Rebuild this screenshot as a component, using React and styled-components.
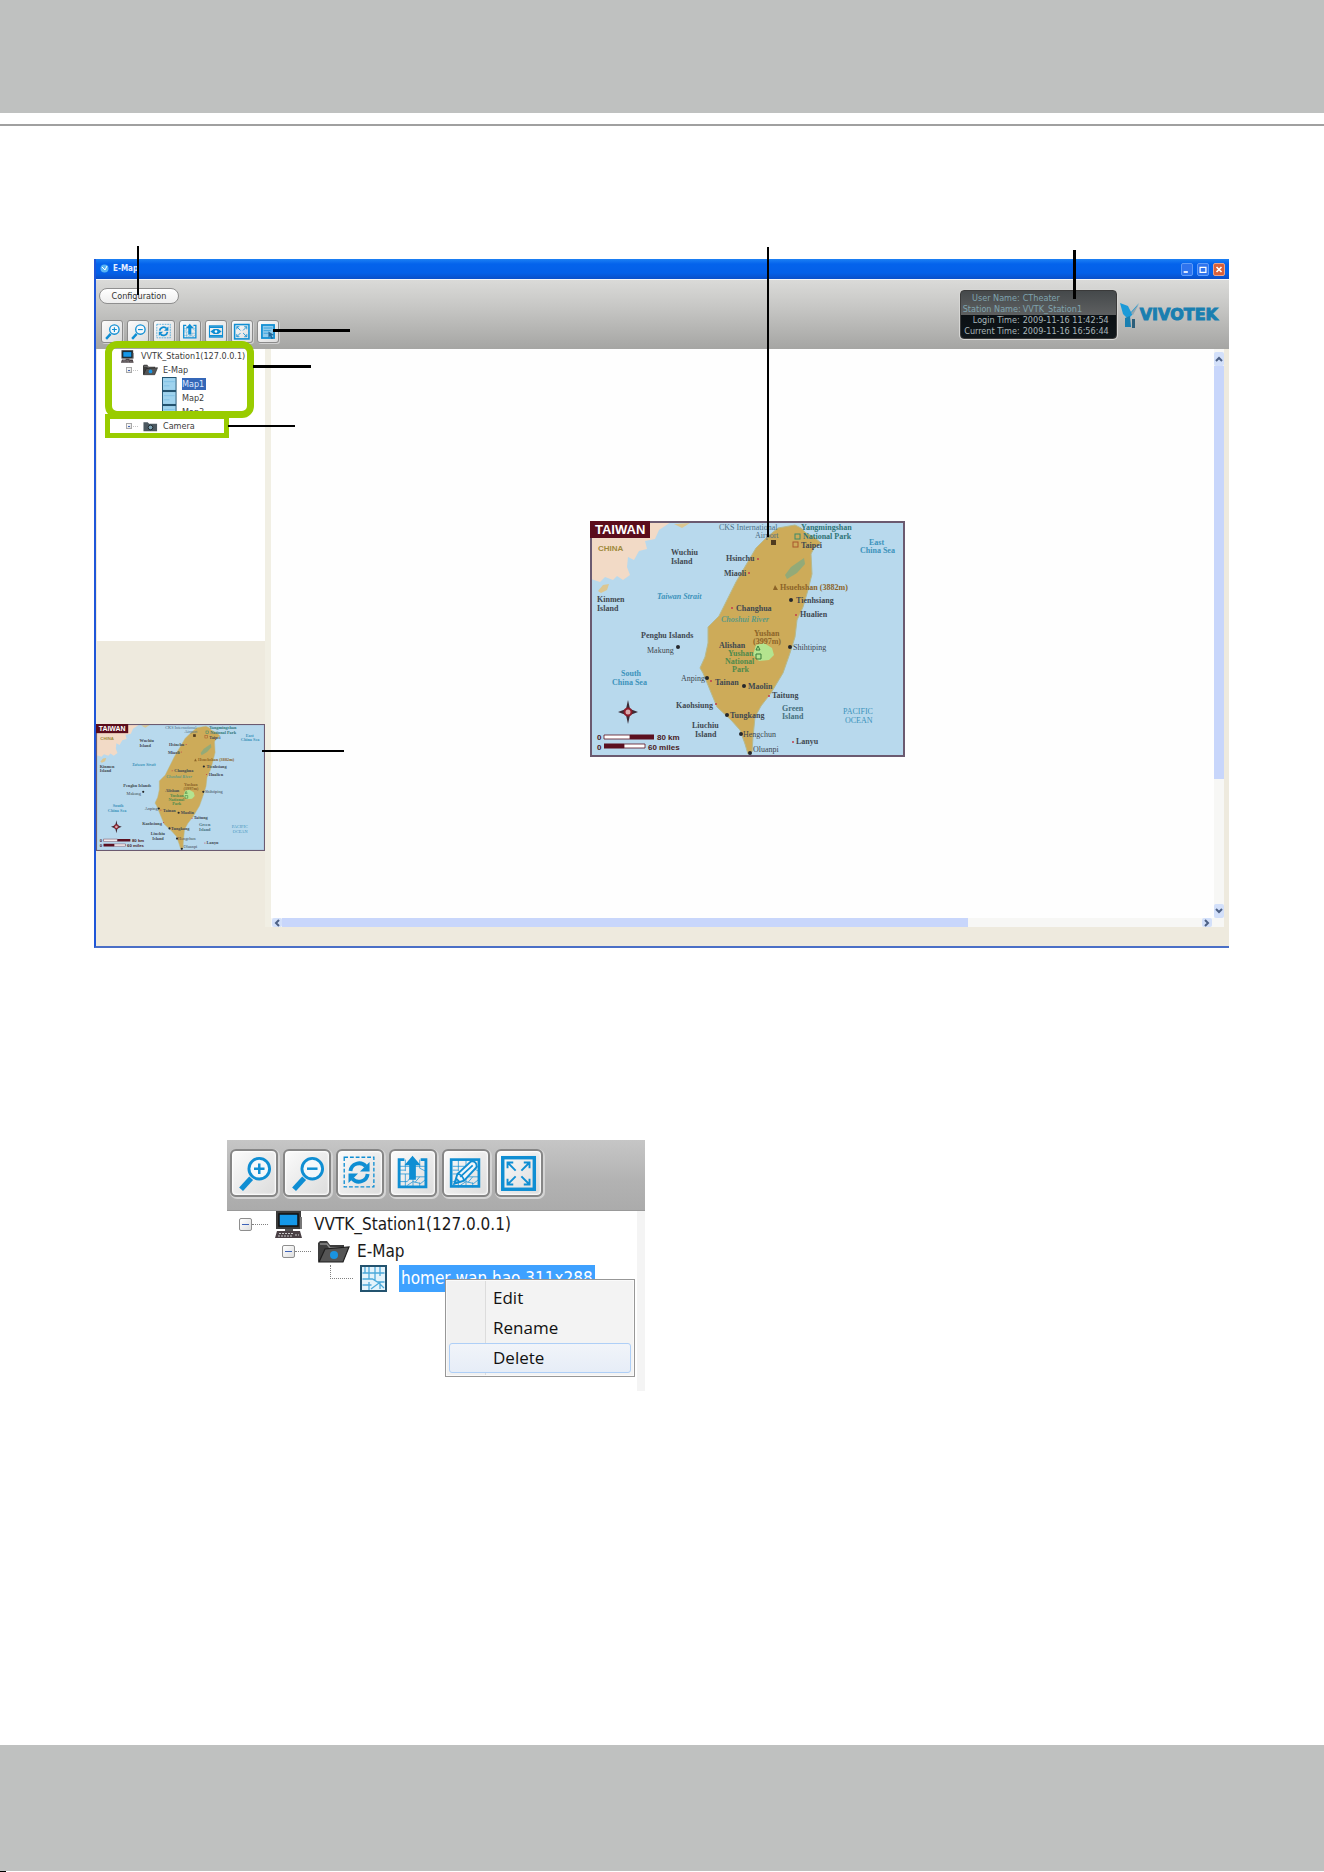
import React, { useState } from "react";
import styled, { createGlobalStyle, css } from "styled-components";

const GlobalStyle = createGlobalStyle`
* {
  box-sizing: border-box;
}
body {
  margin: 0;
  background: #ffffff;
  font-family: "DejaVu Sans Condensed", "DejaVu Sans", sans-serif;
}
button {
  font-family: inherit;
  cursor: pointer;
}
`;

const BLUE = "#0f8ed3";

/* ---------- page ---------- */

const Page = styled.div`
  min-height: 100vh;
  display: flex;
  flex-direction: column;
`;

const PageHeader = styled.header`
  height: 126px;
  border-bottom: 2px solid #a0a0a0;

  &::before {
    content: "";
    display: block;
    height: 113px;
    background: #bfc1c0;
  }
`;

const PageBody = styled.main`
  flex: 1;
  padding: 133px 95px 0 94px;
`;

const PageFooter = styled.footer`
  height: 127px;
  display: flex;
  flex-direction: column;
  background: #bfc1c0;
`;

const FooterEdge = styled.div`
  height: 1px;
  margin-top: auto;
  background: linear-gradient(90deg, #000000 6px, #ffffff 6px);
`;

/* callout line that starts on the part it points at */
const Leader = styled.span`
  position: absolute;
  z-index: 5;
  background: #000000;
  left: ${p => p.$x}px;
  top: ${p => p.$y}px;
  width: ${p => (p.$vertical ? p.$thick || 2 : p.$length)}px;
  height: ${p => (p.$vertical ? p.$length : p.$thick || 2)}px;
`;

const Anchor = styled.div`
  position: relative;
`;

const Highlight = styled.span`
  position: absolute;
  z-index: 4;
  left: 8px;
  top: ${p => p.$top}px;
  width: ${p => p.$width}px;
  height: ${p => p.$height}px;
  border: ${p => p.$border}px solid #99cc00;
  border-radius: ${p => p.$radius || 0}px;
  pointer-events: none;
`;

/* ---------- e-map window ---------- */

const Window = styled.section`
  background: #eeeade;
  border-left: 2px solid #1f56d8;
  border-bottom: 2px solid #4a6fc6;
`;

const TitleBar = styled.div`
  height: 21px;
  display: flex;
  align-items: center;
  gap: 4px;
  padding: 0 4px;
  background: linear-gradient(#1c80f4, #0463ec 25%, #0460e8 70%, #0a4fc8);
  border-bottom: 1px solid #f4f6fa;
`;

const WindowTitle = styled.h1`
  flex: 1;
  margin: 0;
  font-size: 8px;
  line-height: 12px;
  font-weight: 700;
  color: #e4efff;
`;

const WindowButton = styled.button`
  width: 12px;
  height: 13px;
  padding: 0;
  display: flex;
  border: 1px solid ${p => (p.$close ? "#e9a48c" : "#5f9cf8")};
  border-radius: 2px;
  background: ${p => (p.$close ? "#d9603a" : "#2f74ee")};
`;

const Toolbar = styled.div`
  height: 69px;
  display: flex;
  justify-content: space-between;
  align-items: flex-start;
  padding: 8px 11px 0 3px;
  background: linear-gradient(#dadad8, #c9c9c7 35%, #a5a5a3);
`;

const ToolbarLeft = styled.div`
  display: flex;
  flex-direction: column;
  align-items: flex-start;
  gap: 16px;
`;

const ConfigButton = styled.button`
  display: block;
  width: 80px;
  height: 16px;
  padding: 0;
  border: 1px solid #8f8f8f;
  border-radius: 8px;
  background: linear-gradient(#ffffff, #eeeeee);
  font-size: 9px;
  line-height: 12px;
  color: #333333;
`;

const ButtonRow = styled.div`
  display: flex;
  gap: ${p => (p.$large ? 5 : 4)}px;
  padding-left: ${p => (p.$large ? 0 : 2)}px;
`;

const ToolButton = styled.button`
  padding: 0;
  display: block;
  background: linear-gradient(135deg, #fbfbfb, #dcdcdc);
  ${p =>
    p.$large
      ? css`
          width: 48px;
          height: 48px;
          border: 2px solid #868686;
          border-radius: 6px;
          box-shadow: inset 0 0 2px 1px #ffffff, 1px 1px 0 1px #d4d4d4;
        `
      : css`
          width: 22px;
          height: 23px;
          border: 1px solid #8b8b8b;
          border-radius: 3px;
          box-shadow: 1px 1px 0 #d0d0d0;
        `}

  svg {
    display: block;
    width: 100%;
    height: 100%;
  }
`;

const ToolbarRight = styled.div`
  display: flex;
  align-items: center;
  gap: 3px;
  padding-top: 2px;
`;

const Status = styled.dl`
  width: 157px;
  height: 49px;
  margin: 0;
  padding: 2px 0 0 2px;
  display: grid;
  grid-template-columns: 57px 1fr;
  grid-auto-rows: 11px;
  column-gap: 3px;
  border: 1px solid #3a3a3a;
  border-radius: 4px;
  background: linear-gradient(#45494b, #5d5f60 50%, #0b1014 50%, #10161a);
  box-shadow: 0 0 0 1px #d6d6d4;
  font-size: 9px;
  line-height: 11px;
  white-space: nowrap;
`;

const StatusName = styled.dt`
  text-align: right;
  color: ${p => (p.$dim ? "#7fa3ae" : "#a9b6ba")};
`;

const StatusValue = styled.dd`
  margin: 0;
  color: ${p => (p.$dim ? "#7fa3ae" : "#a9b6ba")};
`;

const Logo = styled.div`
  display: flex;
  align-items: center;
  color: #1a7fb0;
  font-family: "DejaVu Sans", sans-serif;
  font-size: 16px;
  line-height: 20px;
  font-weight: 700;
  -webkit-text-stroke: 1px #1a7fb0;

  svg {
    width: 20px;
    height: 28px;
  }
`;

const WindowBody = styled.div`
  display: flex;
  min-height: 597px;
  padding: 0 5px 19px 0;
`;

const Sidebar = styled.aside`
  position: relative;
  width: 169px;
  flex: none;
  display: flex;
  flex-direction: column;
  gap: 83px;
`;

const Tree = styled.div`
  position: relative;
  height: 292px;
  margin-left: 1px;
  background: #ffffff;
`;

const Thumb = styled.div`
  position: relative;
  height: 127px;

  svg {
    display: block;
    width: 100%;
    height: 100%;
  }
`;

const Divider = styled.div`
  width: 6px;
  flex: none;
  background: #f1efe4;
`;

const Viewport = styled.div`
  flex: 1;
  display: flex;
  flex-direction: column;
  background: #fefefe;
`;

const ViewportRow = styled.div`
  flex: 1;
  display: flex;
`;

const Canvas = styled.div`
  flex: 1;
  display: flex;
  align-items: center;
  justify-content: center;
  padding: 10px 0 0 10px;
`;

const MapFrame = styled.div`
  position: relative;
  width: 315px;
  height: 236px;

  svg {
    display: block;
  }
`;

const ScrollBar = styled.div`
  display: flex;
  align-items: center;
  background: #f7f7f5;
  ${p =>
    p.$vertical
      ? css`
          width: 10px;
          flex-direction: column;
          padding: 3px 0 0;
        `
      : css`
          height: 9px;
          padding: 0 12px 0 1px;
        `}
`;

const ScrollThumb = styled.div`
  background: #c8d6fb;
  flex: 0 0 ${p => p.$share};
  width: ${p => (p.$vertical ? "10px" : "auto")};
  height: ${p => (p.$vertical ? "auto" : "9px")};
  margin-bottom: auto;
  margin-right: auto;
`;

const ScrollArrow = styled.button`
  width: 10px;
  height: ${p => (p.$tall ? 14 : 9)}px;
  flex: none;
  padding: 0;
  display: flex;
  align-items: center;
  justify-content: center;
  border: 0;
  border-radius: 2px;
  background: #d3e0fa;
`;

/* ---------- tree ---------- */

const TreeRow = styled.div`
  display: flex;
  align-items: center;
  white-space: nowrap;
  padding-left: ${p => p.$indent}px;
  ${p =>
    p.$large
      ? css`
          height: 27px;
          gap: 7px;
          font-size: 17px;
          line-height: 27px;
          color: #1a1a1a;
        `
      : css`
          height: 14px;
          gap: 5px;
          font-size: 9px;
          line-height: 12px;
          color: #3c3c3c;
        `}

  svg {
    flex: none;
  }
`;

const Branch = styled.span`
  display: flex;
  align-items: center;

  &::after {
    content: "";
    width: ${p => (p.$large ? 16 : 5)}px;
    border-top: 1px dotted ${p => (p.$large ? "#808080" : "#c4c4c4")};
    margin-left: ${p => (p.$large ? 0 : 1)}px;
  }
`;

const Toggle = styled.button`
  width: ${p => (p.$large ? 13 : 6)}px;
  height: ${p => (p.$large ? 13 : 6)}px;
  padding: 0;
  display: flex;
  align-items: center;
  justify-content: center;
  border: 1px solid ${p => (p.$large ? "#8e8e8e" : "#a8a8a8")};
  border-radius: ${p => (p.$large ? 2 : 0)}px;
  background: linear-gradient(135deg, #ffffff, #dedede);

  &::before {
    content: "";
    width: ${p => (p.$large ? 7 : 2)}px;
    height: 1px;
    background: #3f63b8;
  }
`;

const Elbow = styled.span`
  width: 23px;
  height: 14px;
  align-self: flex-start;
  border-left: 1px dotted #808080;
  border-bottom: 1px dotted #808080;
`;

const Label = styled.span`
  ${p =>
    p.$selected &&
    (p.$large
      ? css`
          padding: 0 2px;
          color: #ffffff;
          background: #3ea1ff;
        `
      : css`
          width: 24px;
          color: #dbe8ff;
          background: #3567b8;
        `)}
`;

/* ---------- detail panel ---------- */

const Detail = styled.section`
  max-width: 418px;
  margin: 192px 0 0 133px;
`;

const DetailBar = styled.div`
  height: 71px;
  padding: 9px 3px;
  background: linear-gradient(#c6c6c6, #b2b2b2 60%, #ababab);
  border-bottom: 1px solid #999999;
`;

const DetailTree = styled.div`
  position: relative;
  height: 180px;
  border-right: 8px solid #f4f4f4;
`;

const ContextMenu = styled.div`
  position: absolute;
  left: 218px;
  top: 68px;
  width: 190px;
  padding: 3px;
  display: flex;
  flex-direction: column;
  border: 1px solid #979797;
  background: linear-gradient(90deg, #f1f1f1 39px, #dcdcdc 39px, #dcdcdc 40px, #f3f3f3 40px);
  box-shadow: inset 0 0 0 1px #fafafa;
`;

const MenuItem = styled.button`
  height: 30px;
  padding: 0 0 0 43px;
  text-align: left;
  border: 1px solid ${p => (p.$active ? "#aecff7" : "transparent")};
  border-radius: 3px;
  background: ${p => (p.$active ? "linear-gradient(#f1f4f9, #e6edf7)" : "none")};
  font-family: "Open Sans", sans-serif;
  font-size: 17px;
  line-height: 24px;
  color: #111111;
`;

/* ---------- icons ---------- */

const MapGrid = () => (
  <path
    d="M10 17h27M10 25h12l4 3h11M10 33h8l3-4M16 10v12M16 25v14M24 10v15M24 28v10M31 10v9l6 3M31 28l-5 6M31 34v5M10 21h6M18 37l6-4 8 2 5-4"
    fill="none"
    stroke={BLUE}
    strokeWidth="1"
    opacity="0.75"
  />
);

const shapes = {
  zoomIn: (
    <>
      <path d="M21 29.5L10.500 41" stroke={BLUE} strokeWidth="5.500" />
      <circle cx="29.500" cy="19.500" r="10.800" fill="#f4f8fb" stroke={BLUE} strokeWidth="3" />
      <path d="M24 19.500h11M29.500 14v11" stroke={BLUE} strokeWidth="2.600" />
    </>
  ),
  zoomOut: (
    <>
      <path d="M21 29.500L10.500 41" stroke={BLUE} strokeWidth="5.500" />
      <circle cx="29.500" cy="19.500" r="10.800" fill="#f4f8fb" stroke={BLUE} strokeWidth="3" />
      <path d="M24 19.500h11" stroke={BLUE} strokeWidth="2.600" />
    </>
  ),
  refresh: (
    <>
      <rect x="7.500" y="7.500" width="31" height="31" fill="none" stroke={BLUE} strokeWidth="1.400" strokeDasharray="4 2" />
      <path d="M14 22a9.200 9.200 0 0 1 16-5" fill="none" stroke={BLUE} strokeWidth="4" />
      <path d="M34 12.500v10h-10z" fill={BLUE} />
      <path d="M32 25a9.200 9.200 0 0 1-16 5" fill="none" stroke={BLUE} strokeWidth="4" />
      <path d="M12 34.500v-10h10z" fill={BLUE} />
    </>
  ),
  upload: (
    <>
      <MapGrid />
      <path d="M15 10H9.500v28.500h28V10H32" fill="none" stroke={BLUE} strokeWidth="3" />
      <path d="M23.500 6l8.500 10h-5v15h-7V16h-5z" fill={BLUE} />
    </>
  ),
  edit: (
    <>
      <MapGrid />
      <rect x="8.500" y="10" width="29" height="28" fill="none" stroke={BLUE} strokeWidth="2.800" />
      <path d="M12 35l3-10 14-13c4-1 7 2 6 6L22 32z" fill="#eef5fa" stroke={BLUE} strokeWidth="2" />
      <path d="M18 28l13-12M15 25c3 0 6 3 7 7M12 35l5-2-3-3z" fill="none" stroke={BLUE} strokeWidth="1.800" />
    </>
  ),
  pan: (
    <>
      <rect x="9" y="11" width="30" height="26" fill="none" stroke={BLUE} strokeWidth="2.500" />
      <path d="M10 14h28M10 34h28" stroke={BLUE} strokeWidth="4" />
      <path d="M11 24l8-6h10l8 6-8 6H19z" fill={BLUE} />
      <circle cx="24" cy="24" r="3" fill="#ffffff" />
    </>
  ),
  full: (
    <>
      <rect x="7" y="8" width="33" height="33" fill="none" stroke={BLUE} strokeWidth="3.600" />
      <path
        d="M12 19v-6h6M12 13l8.500 8.500M29 13h6v6M35 13l-8.500 8.500M12 30v6h6M12 36l8.500-8.500M29 36h6v-6M35 36l-8.500-8.500"
        fill="none"
        stroke={BLUE}
        strokeWidth="2"
      />
    </>
  ),
  page: (
    <>
      <rect x="10" y="9" width="28" height="30" fill="#8ecaec" stroke={BLUE} strokeWidth="4" />
      <path d="M14 16h20M14 22h16M14 28h12" stroke={BLUE} strokeWidth="1.500" />
      <path d="M25 24l13 8-6 1 4 7-4 1-3-6-4 3z" fill="#20679a" />
    </>
  ),
};

const ToolIcon = ({ name }) => (
  <svg viewBox="1 1 46 46" aria-hidden="true">
    {shapes[name]}
  </svg>
);

const Computer = ({ w, h }) => (
  <svg width={w} height={h} viewBox="0 0 32 27" preserveAspectRatio="xMinYMid meet" aria-hidden="true">
    <path d="M1 0h25v18H1z" fill="#3b3b3b" />
    <path d="M4 3h19v12H4z" fill="#1598e8" stroke="#111111" strokeWidth="1.500" />
    <path d="M10 18h8v3h-8z" fill="#555555" />
    <path d="M2 20h23l2 7H0z" fill="#4a4044" />
    <path d="M4 22.500h14M3 25h15M20 24h4" stroke="#c8c8c8" strokeWidth="1" strokeDasharray="2 1" />
    <path d="M25 6h2v12h-2z" fill="#777777" />
  </svg>
);

const Folder = ({ w, h }) => (
  <svg width={w} height={h} viewBox="0 0 32 22" preserveAspectRatio="xMinYMid meet" aria-hidden="true">
    <path d="M0 21V2l2-2h7l3 4h14v6z" fill="#3d3d3d" />
    <path d="M2 3h7l3 4h12" stroke="#8a8a8a" strokeWidth="1.500" fill="none" />
    <path d="M1 21L7 8l24-2-6 15z" fill="#555555" stroke="#1e1e1e" strokeWidth="1.200" />
    <circle cx="16" cy="14" r="4" fill="#1a93e0" />
  </svg>
);

const MapSheet = ({ w, h, plain }) => (
  <svg width={w} height={h} viewBox="0 0 32 27" preserveAspectRatio={plain ? "none" : "xMinYMid meet"} aria-hidden="true">
    <rect x="1" y="1" width={plain ? 29 : 25} height="25" fill={plain ? "#9fd3ee" : "#e4f3fb"} stroke="#23536f" strokeWidth="2" />
    {plain ? (
      <path d="M4 9h23M4 17h12" stroke="#79bde3" strokeWidth="1.500" />
    ) : (
      <path
        d="M2.500 8h22M2.500 14h10l5 3h7M2.500 20h9M9 2v12M9 17v8M15 2v13M20 2v9M20 17v7M11 24l8-6 5 5M5 2v6"
        fill="none"
        stroke="#4ba9da"
        strokeWidth="1.300"
      />
    )}
  </svg>
);

const CameraBox = ({ w, h }) => (
  <svg width={w} height={h} viewBox="0 0 32 22" preserveAspectRatio="xMinYMid meet" aria-hidden="true">
    <path d="M1 21V2h9l3 3h17v16z" fill="#4c5860" />
    <circle cx="16" cy="13" r="5" fill="#7fa5b8" stroke="#1d262b" strokeWidth="2" />
  </svg>
);

/* ---------- map ---------- */

const MapText = styled.text`
  font-family: ${p => (p.$sans ? '"Liberation Sans", sans-serif' : '"Liberation Serif", serif')};
  font-size: 8px;
  font-weight: ${p => (p.$light ? 400 : 700)};
  font-style: ${p => (p.$italic ? "italic" : "normal")};
  fill: ${p => p.$color || "#3f4850"};
`;

const MapHeading = styled.text`
  font-family: "Liberation Sans", sans-serif;
  font-size: 13px;
  font-weight: 700;
  fill: #ffffff;
`;

const TEAL = "#3c93bb";
const BROWN = "#8c6428";
const GREEN = "#4f8a4c";

const places = [
  { x: 8, y: 30, t: "CHINA", c: "#a08a3c", sans: true },
  { x: 81, y: 34, t: "Wuchiu" },
  { x: 81, y: 43, t: "Island" },
  { x: 7, y: 81, t: "Kinmen" },
  { x: 7, y: 90, t: "Island" },
  { x: 67, y: 78, t: "Taiwan Strait", c: TEAL, i: true },
  { x: 51, y: 117, t: "Penghu Islands" },
  { x: 57, y: 132, t: "Makung", l: true },
  { x: 31, y: 155, t: "South", c: TEAL },
  { x: 22, y: 164, t: "China Sea", c: TEAL },
  { x: 91, y: 160, t: "Anping", l: true },
  { x: 125, y: 164, t: "Tainan" },
  { x: 86, y: 187, t: "Kaohsiung" },
  { x: 102, y: 207, t: "Liuchiu" },
  { x: 105, y: 216, t: "Island" },
  { x: 129, y: 9, t: "CKS International", c: "#4d6f86", l: true },
  { x: 165, y: 17, t: "Airport", c: "#4d6f86", l: true },
  { x: 211, y: 9, t: "Yangmingshan", c: "#2f7476" },
  { x: 213, y: 18, t: "National Park", c: "#2f7476" },
  { x: 211, y: 27, t: "Taipei" },
  { x: 279, y: 24, t: "East", c: TEAL },
  { x: 270, y: 32, t: "China Sea", c: TEAL },
  { x: 136, y: 40, t: "Hsinchu" },
  { x: 134, y: 55, t: "Miaoli" },
  { x: 190, y: 69, t: "Hsuehshan (3882m)", c: BROWN },
  { x: 206, y: 82, t: "Tienhsiang" },
  { x: 210, y: 96, t: "Hualien" },
  { x: 146, y: 90, t: "Changhua" },
  { x: 131, y: 101, t: "Choshui River", c: "#5d9a84", i: true },
  { x: 164, y: 115, t: "Yushan", c: BROWN },
  { x: 163, y: 123, t: "(3997m)", c: BROWN },
  { x: 129, y: 127, t: "Alishan" },
  { x: 138, y: 135, t: "Yushan", c: GREEN },
  { x: 135, y: 143, t: "National", c: GREEN },
  { x: 142, y: 151, t: "Park", c: GREEN },
  { x: 203, y: 129, t: "Shihtiping", l: true },
  { x: 158, y: 168, t: "Maolin" },
  { x: 182, y: 177, t: "Taitung" },
  { x: 192, y: 190, t: "Green", c: "#456f7d" },
  { x: 192, y: 198, t: "Island", c: "#456f7d" },
  { x: 253, y: 193, t: "PACIFIC", c: TEAL, l: true },
  { x: 255, y: 202, t: "OCEAN", c: TEAL, l: true },
  { x: 140, y: 197, t: "Tungkang" },
  { x: 153, y: 216, t: "Hengchun", l: true },
  { x: 206, y: 223, t: "Lanyu" },
  { x: 163, y: 231, t: "Oluanpi", l: true },
  { x: 67, y: 219, t: "80 km", c: "#4a1c24", sans: true },
  { x: 58, y: 229, t: "60 miles", c: "#4a1c24", sans: true },
  { x: 7, y: 219, t: "0", c: "#4a1c24", sans: true },
  { x: 7, y: 229, t: "0", c: "#4a1c24", sans: true },
];

const dots = [
  [88, 126], [117, 157], [154, 165], [137, 194], [201, 79], [200, 126], [160, 232], [151, 213],
];

const redDots = [
  [121, 160], [126, 183], [168, 38], [159, 52], [206, 94], [179, 175], [142, 87], [203, 221],
];

function TaiwanMap() {
  return (
    <svg width="315" height="236" viewBox="0 0 315 236" preserveAspectRatio="none" role="img" aria-label="Map of Taiwan">
      <rect width="315" height="236" fill="#b8d9ed" />
      <path
        d="M1 1h80l-12 8-4 9-10 2 2 8-8 2-5 9-6-3-1 10 3 8-7 5-6-4-4 4-8-3-5 5-9-3z"
        fill="#f2dac6"
      />
      <path d="M84 3l16-1-8 5zM8 70l5-6 6-1-2 6-6 3z" fill="#dcc690" />
      <path
        d="M205 4l6 3 5 5 8 4 7 6-7 5-3 6 1 20-4 16-5 17-6 13-2 17-5 16-7 20-12 20-10 13-6 11-2 20-1 15-4 2-3-10-5-14-9-10-14-13-7-17-7-17-3-5 5-11 3-14v-16l11-11 7-14 10-20 10-17 10-17 10-10 12-10z"
        fill="#cdab59"
        stroke="#b7b98c"
        strokeWidth="1"
      />
      <path d="M195 54l6-8 13-9 1 6-8 9-10 6z" fill="#93aa78" />
      <path d="M166 124l8-2 8 5 2 7-5 5-10 1-6-6z" fill="#b4e48f" />
      <path d="M168 125l2 4h-4zM166 133h5v5h-5z" fill="none" stroke="#387a3a" />
      <path d="M185 64l3 5h-5z" fill={BROWN} />
      <rect x="181" y="19" width="5" height="5" fill="#4f3b20" />
      <rect x="205" y="13" width="5" height="5" fill="none" stroke="#3d8a6a" />
      <rect x="203" y="21" width="5" height="5" fill="none" stroke="#a8572c" />
      {dots.map(([x, y]) => (
        <circle key={x + "-" + y} cx={x} cy={y} r="2" fill="#25282c" />
      ))}
      {redDots.map(([x, y]) => (
        <circle key={x + "-" + y} cx={x} cy={y} r="1" fill="#c23c4c" />
      ))}
      {places.map(p => (
        <MapText key={p.t + p.x + p.y} x={p.x} y={p.y} $color={p.c} $italic={p.i} $light={p.l} $sans={p.sans}>
          {p.t}
        </MapText>
      ))}
      <path d="M38 179l2 9 8 3-8 3-2 9-2-9-8-3 8-3z" fill="#3c2b35" />
      <circle cx="38" cy="191" r="3.500" fill="#d9a9ac" stroke="#8b1c2a" strokeWidth="2" />
      <path d="M14 214h26v4H14z" fill="#ffffff" stroke="#5b1020" strokeWidth="0.800" />
      <path d="M40 213.500h24v5H40zM14 222.500h20v5H14z" fill="#5b1020" />
      <path d="M34 223h21v4H34z" fill="#ffffff" stroke="#5b1020" strokeWidth="0.800" />
      <rect x="1" y="1" width="313" height="234" fill="none" stroke="#6b5a70" strokeWidth="2" />
      <rect width="60" height="17" fill="#5b0d1c" />
      <MapHeading x="5" y="13">TAIWAN</MapHeading>
    </svg>
  );
}

/* ---------- data ---------- */

const mainTools = [
  ["zoomIn", "Zoom in"],
  ["zoomOut", "Zoom out"],
  ["refresh", "Refresh"],
  ["upload", "Upload map"],
  ["pan", "View"],
  ["full", "Full screen"],
  ["page", "Save"],
];

const detailTools = [
  ["zoomIn", "Zoom in"],
  ["zoomOut", "Zoom out"],
  ["refresh", "Refresh"],
  ["upload", "Upload map"],
  ["edit", "Edit map"],
  ["full", "Full screen"],
];

const session = [
  ["User Name:", "CTheater", true],
  ["Station Name:", "VVTK_Station1", true],
  ["Login Time:", "2009-11-16 11:42:54", false],
  ["Current Time:", "2009-11-16 16:56:44", false],
];

const maps = ["Map1", "Map2", "Map3"];

const Tools = ({ items, large }) => (
  <ButtonRow $large={large}>
    {items.map(([name, title]) => (
      <ToolButton key={name} $large={large} aria-label={title}>
        <ToolIcon name={name} />
      </ToolButton>
    ))}
  </ButtonRow>
);

const Chevron = ({ d }) => (
  <svg width="8" height="8" viewBox="0 0 8 8" aria-hidden="true">
    <path d={d} fill="none" stroke="#4d6185" strokeWidth="2" />
  </svg>
);

function EMapWindow() {
  const [selected, setSelected] = useState("Map1");

  return (
    <Window>
      <TitleBar>
        <svg width="9" height="10" viewBox="0 0 9 10" aria-hidden="true">
          <circle cx="4.500" cy="4.500" r="4" fill="#58b4f4" />
          <path d="M2 3l3 3 2-4" stroke="#ffffff" fill="none" />
        </svg>
        <WindowTitle>E-Map</WindowTitle>
        <WindowButton aria-label="Minimize">
          <svg viewBox="0 0 12 12"><path d="M2 9h5" stroke="#ffffff" strokeWidth="2" /></svg>
        </WindowButton>
        <WindowButton aria-label="Maximize">
          <svg viewBox="0 0 12 12"><path d="M2.500 3.500h7v6h-7z" stroke="#ffffff" strokeWidth="1.500" fill="none" /></svg>
        </WindowButton>
        <WindowButton $close aria-label="Close">
          <svg viewBox="0 0 12 12"><path d="M3 3l6 6M9 3l-6 6" stroke="#ffffff" strokeWidth="2" /></svg>
        </WindowButton>
      </TitleBar>

      <Toolbar>
        <ToolbarLeft>
          <Anchor>
            <ConfigButton>Configuration</ConfigButton>
            <Leader $vertical $x={38} $y={-42} $length={49} />
          </Anchor>
          <Anchor>
            <Tools items={mainTools} />
            <Leader $x={174} $y={9} $length={77} $thick={3} />
          </Anchor>
        </ToolbarLeft>
        <ToolbarRight>
          <Anchor>
            <Status>
              {session.map(([name, value, dim]) => (
                <React.Fragment key={name}>
                  <StatusName $dim={dim}>{name}</StatusName>
                  <StatusValue $dim={dim}>{value}</StatusValue>
                </React.Fragment>
              ))}
            </Status>
            <Leader $vertical $x={113} $y={-40} $length={49} $thick={3} />
          </Anchor>
          <Logo>
            <svg viewBox="0 0 20 28" aria-hidden="true">
              <path d="M0 2l8 3 3 6 8-9-7 12-4 4-5-5z" fill="#1c9ad8" />
              <path d="M11 12l8-9-6 11z" fill="#93a6ae" />
              <path d="M5 17l5-2 1 11H5z" fill="#1a7fb0" />
              <path d="M12 18h3v9h-3z" fill="#2d5f7a" />
            </svg>
            VIVOTEK
          </Logo>
        </ToolbarRight>
      </Toolbar>

      <WindowBody>
        <Sidebar>
          <Tree>
            <TreeRow $indent={24}>
              <Computer w={15} h={13} />
              <Label>VVTK_Station1(127.0.0.1)</Label>
            </TreeRow>
            <TreeRow $indent={29}>
              <Branch><Toggle aria-label="Collapse E-Map" /></Branch>
              <Folder w={15} h={12} />
              <Label>E-Map</Label>
            </TreeRow>
            {maps.map(name => (
              <TreeRow key={name} $indent={65} onClick={() => setSelected(name)}>
                <MapSheet w={15} h={14} plain />
                <Label $selected={selected === name}>{name}</Label>
              </TreeRow>
            ))}
            <TreeRow $indent={29}>
              <Branch><Toggle aria-label="Expand Camera" /></Branch>
              <CameraBox w={15} h={11} />
              <Label>Camera</Label>
            </TreeRow>
            <Highlight $top={65} $width={124} $height={24} $border={5} />
            <Highlight $top={-8} $width={149} $height={77} $border={7} $radius={12} />
            <Leader $x={156} $y={16} $length={58} $thick={3} />
            <Leader $x={131} $y={76} $length={67} />
          </Tree>
          <Thumb>
            <TaiwanMap />
            <Leader $x={166} $y={26} $length={82} />
          </Thumb>
        </Sidebar>
        <Divider />
        <Viewport>
          <ViewportRow>
            <Canvas>
              <MapFrame>
                <TaiwanMap />
                <Leader $vertical $x={177} $y={-274} $length={290} />
              </MapFrame>
            </Canvas>
            <ScrollBar $vertical>
              <ScrollArrow $tall aria-label="Scroll up"><Chevron d="M1 6l3-3 3 3" /></ScrollArrow>
              <ScrollThumb $vertical $share="73%" />
              <ScrollArrow $tall aria-label="Scroll down"><Chevron d="M1 2l3 3 3-3" /></ScrollArrow>
            </ScrollBar>
          </ViewportRow>
          <ScrollBar>
            <ScrollArrow aria-label="Scroll left"><Chevron d="M6 1L3 4l3 3" /></ScrollArrow>
            <ScrollThumb $share="73%" />
            <ScrollArrow aria-label="Scroll right"><Chevron d="M2 1l3 3-3 3" /></ScrollArrow>
          </ScrollBar>
        </Viewport>
      </WindowBody>
    </Window>
  );
}

function MapMenuDetail() {
  const [active, setActive] = useState("Delete");

  return (
    <Detail>
      <DetailBar>
        <Tools items={detailTools} large />
      </DetailBar>
      <DetailTree>
        <TreeRow $large $indent={12}>
          <Branch $large><Toggle $large aria-label="Collapse station" /></Branch>
          <Computer w={32} h={27} />
          <Label>VVTK_Station1(127.0.0.1)</Label>
        </TreeRow>
        <TreeRow $large $indent={55}>
          <Branch $large><Toggle $large aria-label="Collapse E-Map" /></Branch>
          <Folder w={32} h={22} />
          <Label>E-Map</Label>
        </TreeRow>
        <TreeRow $large $indent={103}>
          <Elbow />
          <MapSheet w={32} h={27} />
          <Label $large $selected>homer wan hao 311x288</Label>
        </TreeRow>
        <ContextMenu role="menu">
          {["Edit", "Rename", "Delete"].map(item => (
            <MenuItem key={item} role="menuitem" $active={active === item} onMouseEnter={() => setActive(item)}>
              {item}
            </MenuItem>
          ))}
        </ContextMenu>
      </DetailTree>
    </Detail>
  );
}

function App() {
  return (
    <Page>
      <GlobalStyle />
      <PageHeader />
      <PageBody>
        <EMapWindow />
        <MapMenuDetail />
      </PageBody>
      <PageFooter>
        <FooterEdge />
      </PageFooter>
    </Page>
  );
}

export default App;
